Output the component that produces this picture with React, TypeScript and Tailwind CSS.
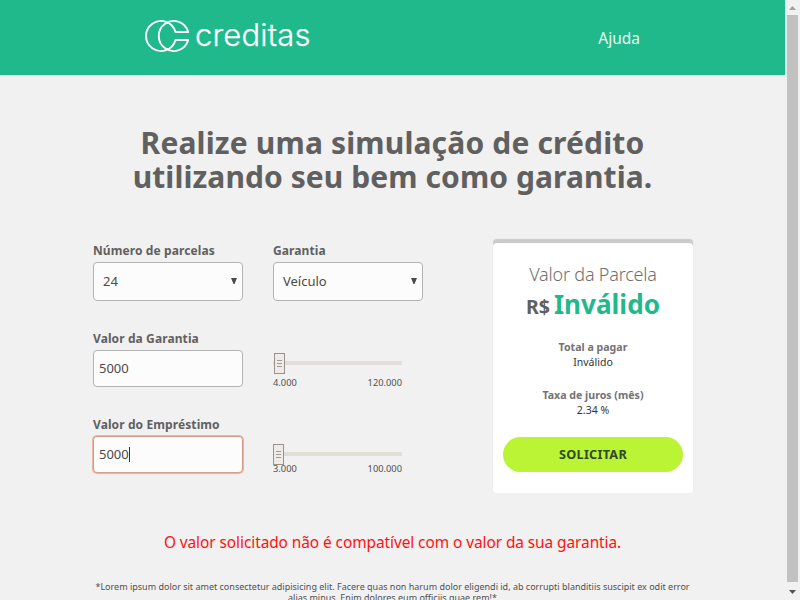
import type { ReactNode } from "react";

function Logo() {
  return (
    <div className="flex h-9 w-[170px] items-center text-white">
      <svg className="mt-[2px] h-[34px] w-[45px] shrink-0 overflow-visible" viewBox="0 0 45 34" fill="none" stroke="currentColor" strokeWidth="1.9" strokeLinejoin="round">
        <path d="M30.5 13H43.2A15 15 0 1 0 43.2 21H30.5A15 15 0 1 1 30.5 13Z" />
      </svg>
      <span className="ml-[5px] font-['Inter',sans-serif] text-[31px] leading-9 font-light tracking-[0.18px] [-webkit-text-stroke:0.25px_white]">creditas</span>
    </div>
  );
}

function Label({ children }: { children: ReactNode }) {
  return <div className="h-[18px] text-[12px] leading-[18px] font-bold tracking-[0.1px] whitespace-nowrap text-[#606060]">{children}</div>;
}

function Select({ value }: { value: string }) {
  return (
    <div className="mt-[2px] flex h-[39px] w-[150px] items-center justify-between rounded-[4px] border border-[#b3b3b3] bg-[#fcfcfc] pr-[5px] pl-[9px] text-[13px] text-[#4a4a4a]">
      <span>{value}</span>
      <svg className="mb-0.5 h-[6px] w-[6px]" viewBox="0 0 6 6" fill="#4a4a4a"><path d="M0 0H6L3.5 6H2.5Z" /></svg>
    </div>
  );
}

function Slider({ min, max, offset, labelGap }: { min: string; max: string; offset: string; labelGap: string }) {
  return (
    <div className="w-[129px]">
      <div className="relative flex h-[21px] items-center">
        <div className="mb-px h-1 w-full bg-[#e1ddd7]" />
        <div className={`absolute top-0 z-10 flex h-[21px] w-[11px] flex-col items-center justify-center gap-[2px] border border-[#9b918a] bg-[#eeebe8] ${offset}`}>
          <i className="h-px w-[5px] bg-[#a39b94]" />
          <i className="h-px w-[5px] bg-[#a39b94]" />
          <i className="h-px w-[5px] bg-[#a39b94]" />
        </div>
      </div>
      <div className={`flex justify-between text-[9.3px] leading-3 text-[#505050] ${labelGap}`}>
        <span>{min}</span>
        <span>{max}</span>
      </div>
    </div>
  );
}

export default function App() {
  return (
    <div className="flex h-[600px] w-[800px] overflow-hidden bg-[#f1f1f1] font-['Noto_Sans',sans-serif]">
      <div className="h-full w-[785px] overflow-hidden">
        <header className="flex h-[75px] justify-between bg-[#1fb98b] pr-[145px] pl-[145px]">
          <div className="pt-[17px]"><Logo /></div>
          <a className="pt-[26px] text-[15.5px] leading-6 text-[#eefaf5]">Ajuda</a>
        </header>

        <h1 className="mt-[51px] text-center text-[30px] leading-[34px] font-bold whitespace-nowrap text-[#606060]">
          <span className="block tracking-[0.16px]">Realize uma simulação de crédito</span>
          <span className="block tracking-[0.08px]">utilizando seu bem como garantia.</span>
        </h1>

        <div className="mt-[45px] flex h-[254px] pl-[93px]">
          <form className="w-[400px] pt-[3px]">
            <div className="flex gap-[30px]">
              <div className="w-[150px]">
                <Label>Número de parcelas</Label>
                <Select value="24" />
              </div>
              <div className="w-[150px]">
                <Label>Garantia</Label>
                <Select value="Veículo" />
              </div>
            </div>
            <div className="mt-[29px] flex gap-[30px]">
              <div className="w-[150px]">
                <Label>Valor da Garantia</Label>
                <div className="mt-[2px] flex h-[37px] items-center rounded-[4px] border border-[#b3b3b3] bg-[#fcfcfc] pl-[5px] text-[13px] text-[#4a4a4a]">5000</div>
              </div>
              <div className="h-[57px] pt-[23px]"><Slider min="4.000" max="120.000" offset="left-px" labelGap="mt-[3px]" /></div>
            </div>
            <div className="mt-[29px] flex gap-[30px]">
              <div className="w-[150px]">
                <Label>Valor do Empréstimo</Label>
                <div className="mt-[2px] flex h-[37px] items-center rounded-[4px] border border-[#d99b85] bg-[#fcfcfc] pl-[5px] text-[13px] text-[#4a4a4a] ring-1 ring-[#efb39d]">
                  5000<span className="h-[15px] w-px bg-[#333333]" />
                </div>
              </div>
              <div className="pt-[28px]"><Slider min="3.000" max="100.000" offset="left-0" labelGap="-mt-[2px]" /></div>
            </div>
          </form>

          <section className="mt-1 flex h-[250px] w-[200px] flex-col items-center rounded-[4px] bg-white pt-[19px] whitespace-nowrap shadow-[0_-4px_1px_-0.5px_#cacaca]">
            <h2 className="h-6 text-[18px] leading-6 font-light tracking-[-0.2px] text-[#707070]">Valor da Parcela</h2>
            <div className="mt-px flex h-[34px] items-baseline gap-1 leading-[34px] font-bold">
              <span className="text-[19.5px] text-[#606060]">R$</span>
              <span className="text-[26.1px] text-[#1fb98b]">Inválido</span>
            </div>
            <div className="mt-[19px] text-[10.6px] leading-[15px] font-bold text-[#737373]">Total a pagar</div>
            <div className="text-[10.5px] leading-[15px] text-[#333333]">Inválido</div>
            <div className="mt-[18px] text-[10.6px] leading-[15px] font-bold text-[#737373]">Taxa de juros (mês)</div>
            <div className="text-[10.5px] leading-[15px] text-[#333333]">2.34 %</div>
            <button className="mt-[19px] h-[35px] w-[180px] rounded-full bg-[#bbf335] pt-px text-[12.7px] font-bold tracking-[0.25px] text-[#30482a]">SOLICITAR</button>
          </section>
        </div>

        <p className="mt-[38px] text-center text-[15.4px] leading-6 tracking-[-0.06px] whitespace-nowrap text-[#ff1010]">O valor solicitado não é compatível com o valor da sua garantia.</p>
        <p className="mt-[26px] text-center text-[9px] leading-[11px] whitespace-nowrap text-[#505050]">
          <span className="block">*Lorem ipsum dolor sit amet consectetur adipisicing elit. Facere quas non harum dolor eligendi id, ab corrupti blanditiis suscipit ex odit error</span>
          <span className="block">alias minus. Enim dolores eum officiis quae rem!*</span>
        </p>
      </div>

      <div className="flex h-full w-[15px] flex-col items-center bg-[#f1f1f1]">
        <svg className="h-[15px] w-[15px]" viewBox="0 0 15 15" fill="#a3a3a3"><path d="M4 10L7.5 6L11 10Z" /></svg>
        <div className="h-[567px] w-[11px] bg-[#c1c1c1]" />
        <svg className="h-[18px] w-[15px]" viewBox="0 0 15 18" fill="#505050"><path d="M4 8H11L7.5 12Z" /></svg>
      </div>
    </div>
  );
}
